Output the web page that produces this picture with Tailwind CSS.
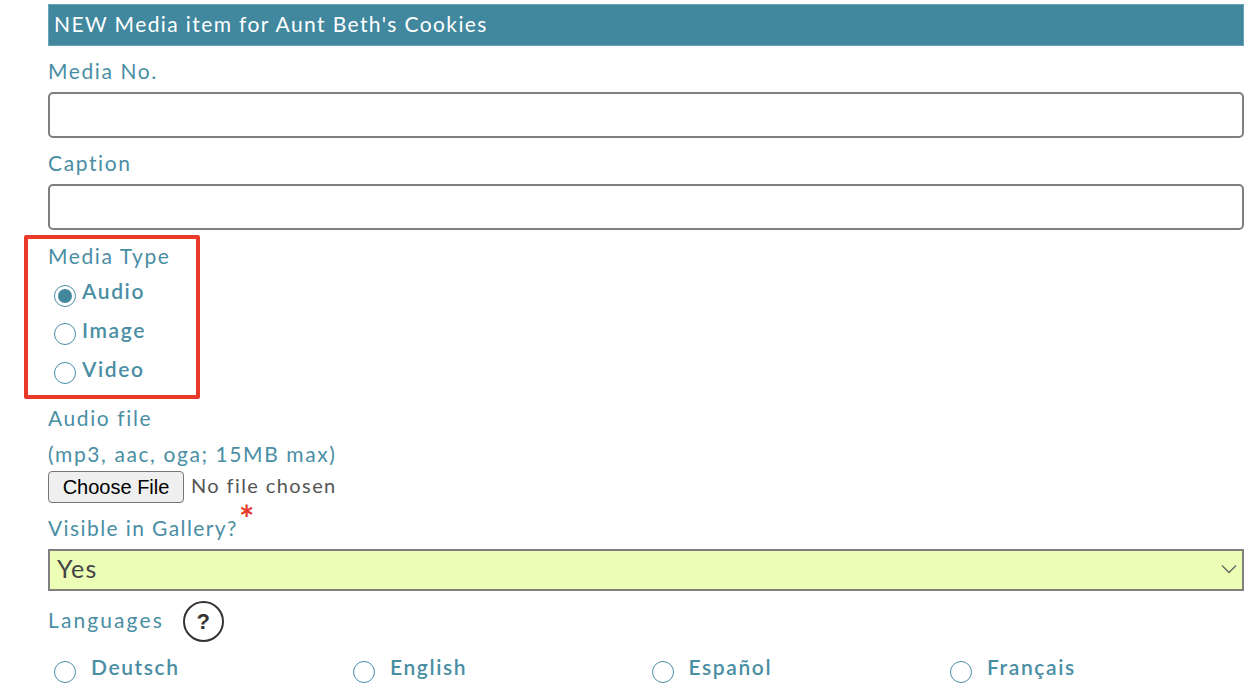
<!DOCTYPE html>
<html lang="en">
<head>
  <meta charset="UTF-8">
  <title>New Media item</title>
  <script src="https://cdn.jsdelivr.net/npm/@tailwindcss/browser@4"></script>
</head>
<body class="bg-white overflow-hidden h-[700px] font-['Lato','Noto_Sans',sans-serif] text-[#4a8ea4]">
  <form class="relative ml-[48px] w-[1196px] pt-[4px]">
    <div class="h-[42px] bg-[#41879e] border border-[#6ba3b6] text-white text-[21px] leading-[38px] tracking-[1.4px] pl-[5px]">NEW Media item for Aunt Beth's Cookies</div>

    <label class="block mt-[11px] text-[21px] leading-[28px] tracking-[1.6px]">Media No.</label>
    <input type="text" class="block mt-[7px] w-full h-[46px] border-2 border-[#7f7f7f] rounded-[5px] bg-white">

    <label class="block mt-[11px] text-[21px] leading-[28px] tracking-[1.6px]">Caption</label>
    <input type="text" class="block mt-[7px] w-full h-[46px] border-2 border-[#7f7f7f] rounded-[5px] bg-white">

    <!-- red annotation round the media type group -->
    <div class="relative mt-[12px]">
      <div class="absolute left-[-24px] top-[-7px] w-[176px] h-[164px] border-[4px] border-[#e8392b] rounded-[2px]"></div>
      <div class="text-[21px] leading-[28px] tracking-[1.6px]">Media Type</div>
      <div class="flex items-start h-[39px] pl-[6px] mt-[1px]">
        <span class="mt-[14px] w-[22px] h-[22px] rounded-full border border-[#4a8ea4] flex items-center justify-center"><span class="w-[14px] h-[14px] rounded-full bg-[#41879e]"></span></span>
        <span class="ml-[6px] mt-[6px] text-[21px] leading-[28px] font-semibold tracking-[1.6px]">Audio</span>
      </div>
      <div class="flex items-start h-[39px] pl-[6px]">
        <span class="mt-[13px] w-[22px] h-[22px] rounded-full border border-[#4a8ea4]"></span>
        <span class="ml-[6px] mt-[6px] text-[21px] leading-[28px] font-semibold tracking-[1.6px]">Image</span>
      </div>
      <div class="flex items-start h-[39px] pl-[6px]">
        <span class="mt-[13px] w-[22px] h-[22px] rounded-full border border-[#4a8ea4]"></span>
        <span class="ml-[6px] mt-[6px] text-[21px] leading-[28px] font-semibold tracking-[1.6px]">Video</span>
      </div>
    </div>

    <div class="mt-[16px] text-[21px] leading-[28px] tracking-[1.6px]">Audio file</div>
    <div class="mt-[8px] text-[21px] leading-[28px] tracking-[1.6px]">(mp3, aac, oga; 15MB max)</div>
    <div class="flex items-center h-[32px] mt-[3px]">
      <button type="button" class="w-[136px] h-[32px] bg-[#efefef] border border-[#767676] rounded-[4px] text-black text-[20px] font-['Liberation_Sans',sans-serif]">Choose File</button>
      <span class="ml-[7px] mb-[4px] text-[#555] text-[20px] tracking-[1.4px]">No file chosen</span>
    </div>

    <div class="relative mt-[11px] text-[21px] leading-[28px] tracking-[1.4px]">Visible in Gallery?<span class="absolute left-[191px] top-[-14px] text-[#e8392b] font-bold text-[36px] leading-[36px] tracking-normal">*</span></div>
    <div class="relative mt-[7px] h-[42px] bg-[#ecfdb6] border-2 border-[#7f7f7f] text-[#444] text-[25px] leading-[35px] tracking-[1.2px] pl-[7px]">
      Yes
      <svg class="absolute right-[5px] top-[13px]" width="16" height="10" viewBox="0 0 16 10" fill="none" stroke="#666" stroke-width="1.3"><path d="M1 1.5 L8 8.5 L15 1.5"/></svg>
    </div>

    <div class="flex items-center mt-[9px] h-[42px]">
      <span class="mb-[2px] text-[21px] leading-[28px] tracking-[2.1px]">Languages</span>
      <span class="ml-[19px] w-[41px] h-[41px] rounded-full border-2 border-[#333] flex items-center justify-center text-[#333] text-[22px] font-bold font-['Liberation_Sans',sans-serif]">?</span>
    </div>

    <div class="grid grid-cols-[299px_298.5px_298.5px_1fr] mt-[10px] pl-[6px]">
      <div class="flex items-start"><span class="mt-[9px] w-[22px] h-[22px] rounded-full border border-[#4a8ea4]"></span><span class="ml-[15px] mt-[1px] text-[21px] leading-[28px] font-semibold tracking-[1.6px]">Deutsch</span></div>
      <div class="flex items-start"><span class="mt-[9px] w-[22px] h-[22px] rounded-full border border-[#4a8ea4]"></span><span class="ml-[15px] mt-[1px] text-[21px] leading-[28px] font-semibold tracking-[1.6px]">English</span></div>
      <div class="flex items-start"><span class="mt-[9px] w-[22px] h-[22px] rounded-full border border-[#4a8ea4]"></span><span class="ml-[15px] mt-[1px] text-[21px] leading-[28px] font-semibold tracking-[1.6px]">Español</span></div>
      <div class="flex items-start"><span class="mt-[9px] w-[22px] h-[22px] rounded-full border border-[#4a8ea4]"></span><span class="ml-[15px] mt-[1px] text-[21px] leading-[28px] font-semibold tracking-[1.6px]">Français</span></div>
    </div>
  </form>
</body>
</html>
